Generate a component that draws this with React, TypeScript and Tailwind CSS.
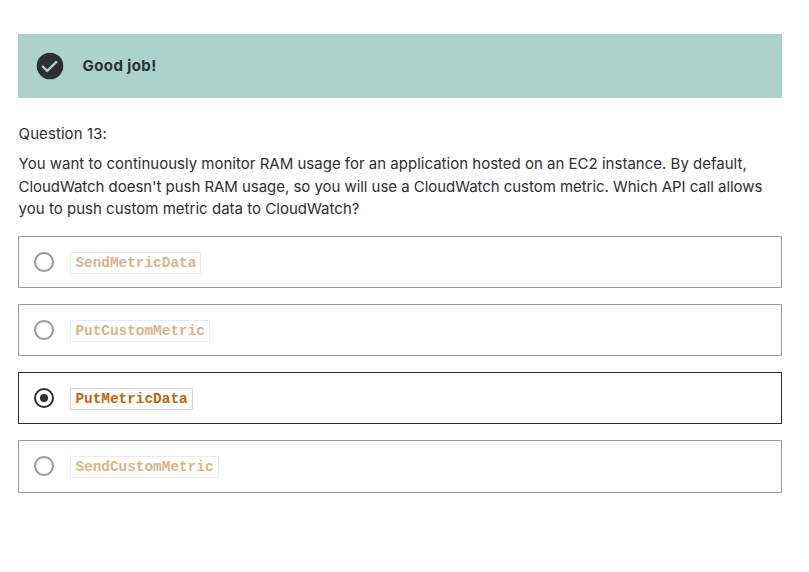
const options = [
  { label: 'SendMetricData', checked: false },
  { label: 'PutCustomMetric', checked: false },
  { label: 'PutMetricData', checked: true },
  { label: 'SendCustomMetric', checked: false },
];

function Option({ label, checked }: { label: string; checked: boolean }) {
  return (
    <label
      className={`flex h-[52px] items-start border pl-[15px] pt-[15px] last:h-[53px] ${checked ? 'border-[#2d2f31]' : 'border-[#969798]'}`}
    >
      <svg className="h-5 w-5 shrink-0" viewBox="0 0 20 20" fill="none">
        <circle cx="10" cy="10" r="9" stroke={checked ? '#2d2f31' : '#969798'} strokeWidth="2" />
        {checked && <circle cx="10" cy="10" r="4" fill="#2d2f31" />}
      </svg>
      <code
        className={`ml-4 flex h-[22px] items-center border border-[#d1d7dc] pl-[4.4px] pr-[4.1px] font-['Liberation_Mono',monospace] text-[14.4px] font-bold leading-5 text-[#b4690e] ${checked ? '' : 'opacity-50'}`}
      >
        {label}
      </code>
    </label>
  );
}

export default function App() {
  return (
    <main className="min-h-[572px] w-[809px] bg-white pl-[18px] pr-[27px] pt-[34px] font-['Inter',sans-serif] text-[15px] text-[#2d2f31]">
      <div className="flex h-16 items-center bg-[#acd2cc] pl-[18px]">
        <svg className="h-7 w-7" viewBox="0 0 28 28" fill="none">
          <circle cx="14" cy="14" r="13.3" fill="#2d2f31" />
          <path d="M6.1 14 11.2 18.8 20.9 9.3" stroke="#acd2cc" strokeWidth="2.4" />
        </svg>
        <span className="ml-[18.5px] font-bold tracking-[0.42px]">Good job!</span>
      </div>
      <p className="mt-[25px] pl-[0.6px] leading-[22.4px] tracking-[0.08px]">Question 13:</p>
      <div className="mt-2 whitespace-nowrap pl-[0.6px] leading-[22.4px]">
        <p className="tracking-[0.006px]">You want to continuously monitor RAM usage for an application hosted on an EC2 instance. By default,</p>
        <p className="tracking-[-0.044px]">CloudWatch doesn't push RAM usage, so you will use a CloudWatch custom metric. Which API call allows</p>
        <p className="tracking-[0.02px]">you to push custom metric data to CloudWatch?</p>
      </div>
      <div className="mt-[15px] flex flex-col gap-4">
        {options.map((o) => (
          <Option key={o.label} {...o} />
        ))}
      </div>
    </main>
  );
}
